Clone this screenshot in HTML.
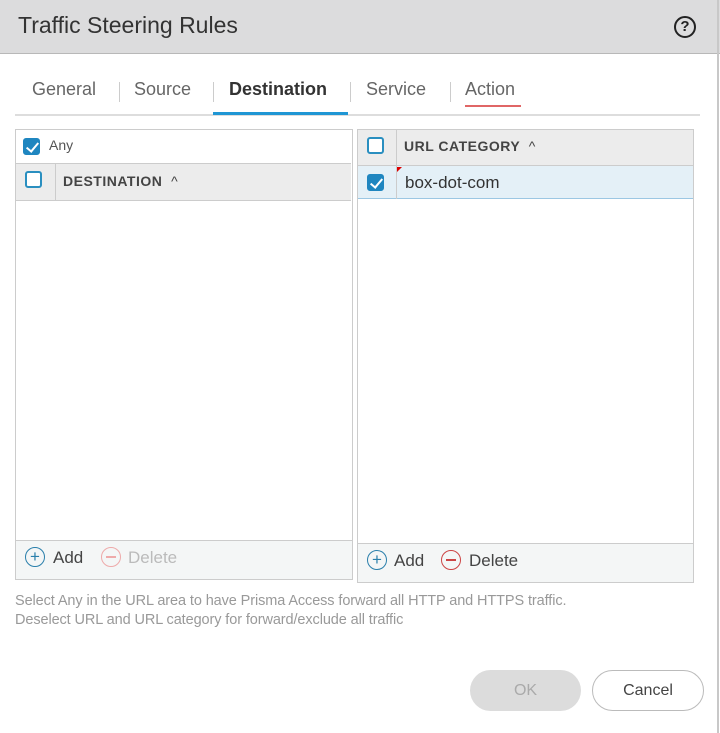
<html><head><style>
body{margin:0;width:720px;height:733px;background:#fff;font-family:"Liberation Sans",sans-serif;position:relative;overflow:hidden}
.a{position:absolute}
.cb{position:absolute;width:17px;height:17px;border:2px solid #2a8fc0;border-radius:3px;box-sizing:border-box;background:#fff}
.cb.on{background:#1f86c0;border-color:#1f86c0}
.cb.on:after{content:"";position:absolute;left:4px;top:0px;width:5px;height:10px;border:solid #fff;border-width:0 2px 2px 0;transform:rotate(40deg)}
.hdr{font-size:14px;font-weight:bold;color:#444;letter-spacing:.5px}
</style></head><body>
<div class="a" style="left:0;top:0;width:720px;height:53px;background:#dcdcdd;border-bottom:1px solid #b8b8b8"></div>
<div class="a" style="left:18px;top:12px;font-size:23px;color:#333">Traffic Steering Rules</div>
<div class="a" style="left:674px;top:16px;width:18px;height:18px;border:2px solid #222;border-radius:50%;text-align:center;font-size:15px;font-weight:bold;line-height:18px;color:#222">?</div>
<div class="a" style="left:717px;top:0;width:2px;height:733px;background:#c8c8c8"></div>
<div class="a" style="left:15px;top:114px;width:685px;height:2px;background:#ddd"></div>
<div class="a" style="top:79px;left:32px;font-size:18px;color:#666">General</div>
<div class="a" style="top:82px;left:119px;width:1px;height:20px;background:#ccc"></div>
<div class="a" style="top:79px;left:134px;font-size:18px;color:#666">Source</div>
<div class="a" style="top:82px;left:213px;width:1px;height:20px;background:#ccc"></div>
<div class="a" style="top:79px;left:229px;font-size:18px;color:#333;font-weight:bold">Destination</div>
<div class="a" style="top:112px;left:213px;width:135px;height:3px;background:#1f96d4"></div>
<div class="a" style="top:82px;left:350px;width:1px;height:20px;background:#ccc"></div>
<div class="a" style="top:79px;left:366px;font-size:18px;color:#666">Service</div>
<div class="a" style="top:82px;left:450px;width:1px;height:20px;background:#ccc"></div>
<div class="a" style="top:79px;left:465px;font-size:18px;color:#666">Action</div>
<div class="a" style="top:105px;left:465px;width:56px;height:2px;background:#e06666"></div>

<!-- left panel -->
<div class="a" style="left:15px;top:129px;width:336px;height:449px;border:1px solid #ccc;overflow:hidden">
<div class="a" style="left:0;top:410px;width:336px;height:40px;background:#f4f6f6;border-top:1px solid #ccc"></div>
</div>
<div class="cb on" style="left:23px;top:138px"></div>
<div class="a" style="left:49px;top:137px;font-size:14px;color:#555">Any</div>
<div class="a" style="left:16px;top:163px;width:335px;height:36px;background:#ececec;border-top:1px solid #ccc;border-bottom:1px solid #ccc"></div>
<div class="a" style="left:55px;top:164px;width:1px;height:36px;background:#ccc"></div>
<div class="cb" style="left:25px;top:171px;border-color:#2a8fc0"></div>
<div class="a hdr" style="left:63px;top:173px">DESTINATION &nbsp;<span style="font-weight:normal">^</span></div>
<div class="a" style="left:25px;top:547px;width:18px;height:18px;border:1.5px solid #2a7fab;border-radius:50%;color:#2a7fab;text-align:center;line-height:17px;font-size:17px">+</div>
<div class="a" style="left:53px;top:548px;font-size:17px;color:#444">Add</div>
<div class="a" style="left:101px;top:547px;width:18px;height:18px;border:1.5px solid #eaa;border-radius:50%"><div class="a" style="left:4px;top:8px;width:10px;height:1.5px;background:#eaa"></div></div>
<div class="a" style="left:128px;top:548px;font-size:17px;color:#bbb">Delete</div>

<!-- right panel -->
<div class="a" style="left:357px;top:129px;width:335px;height:452px;border:1px solid #ccc;overflow:hidden">
<div class="a" style="left:0;top:413px;width:335px;height:40px;background:#f4f6f6;border-top:1px solid #ccc"></div>
</div>
<div class="a" style="left:358px;top:130px;width:335px;height:35px;background:#ececec;border-bottom:1px solid #ccc"></div>
<div class="a" style="left:396px;top:130px;width:1px;height:69px;background:#ccc"></div>
<div class="cb" style="left:367px;top:137px"></div>
<div class="a hdr" style="left:404px;top:138px">URL CATEGORY &nbsp;<span style="font-weight:normal">^</span></div>
<div class="a" style="left:358px;top:166px;width:335px;height:32px;background:#e4f0f7;border-bottom:1px solid #9cc7e3"></div>
<div class="a" style="left:396px;top:166px;width:1px;height:33px;background:#ccc"></div>
<div class="cb on" style="left:367px;top:174px"></div>
<div class="a" style="left:397px;top:167px;width:0;height:0;border-top:5px solid #d00;border-right:5px solid transparent"></div>
<div class="a" style="left:405px;top:173px;font-size:17px;color:#333">box-dot-com</div>
<div class="a" style="left:367px;top:550px;width:18px;height:18px;border:1.5px solid #2a7fab;border-radius:50%;color:#2a7fab;text-align:center;line-height:17px;font-size:17px">+</div>
<div class="a" style="left:394px;top:551px;font-size:17px;color:#444">Add</div>
<div class="a" style="left:441px;top:550px;width:18px;height:18px;border:1.5px solid #c44;border-radius:50%"><div class="a" style="left:4px;top:8px;width:10px;height:1.5px;background:#c44"></div></div>
<div class="a" style="left:469px;top:551px;font-size:17px;color:#444">Delete</div>

<div class="a" style="left:15px;top:592px;font-size:14.5px;color:#999;line-height:19px;letter-spacing:-0.1px">Select Any in the URL area to have Prisma Access forward all HTTP and HTTPS traffic.<br>Deselect URL and URL category for forward/exclude all traffic</div>

<div class="a" style="left:470px;top:670px;width:111px;height:41px;border-radius:21px;background:#dcdcdc;color:#aaa;text-align:center;line-height:41px;font-size:16px">OK</div>
<div class="a" style="left:592px;top:670px;width:110px;height:39px;border-radius:21px;border:1px solid #bbb;color:#444;text-align:center;line-height:39px;font-size:16px">Cancel</div>
</body></html>
